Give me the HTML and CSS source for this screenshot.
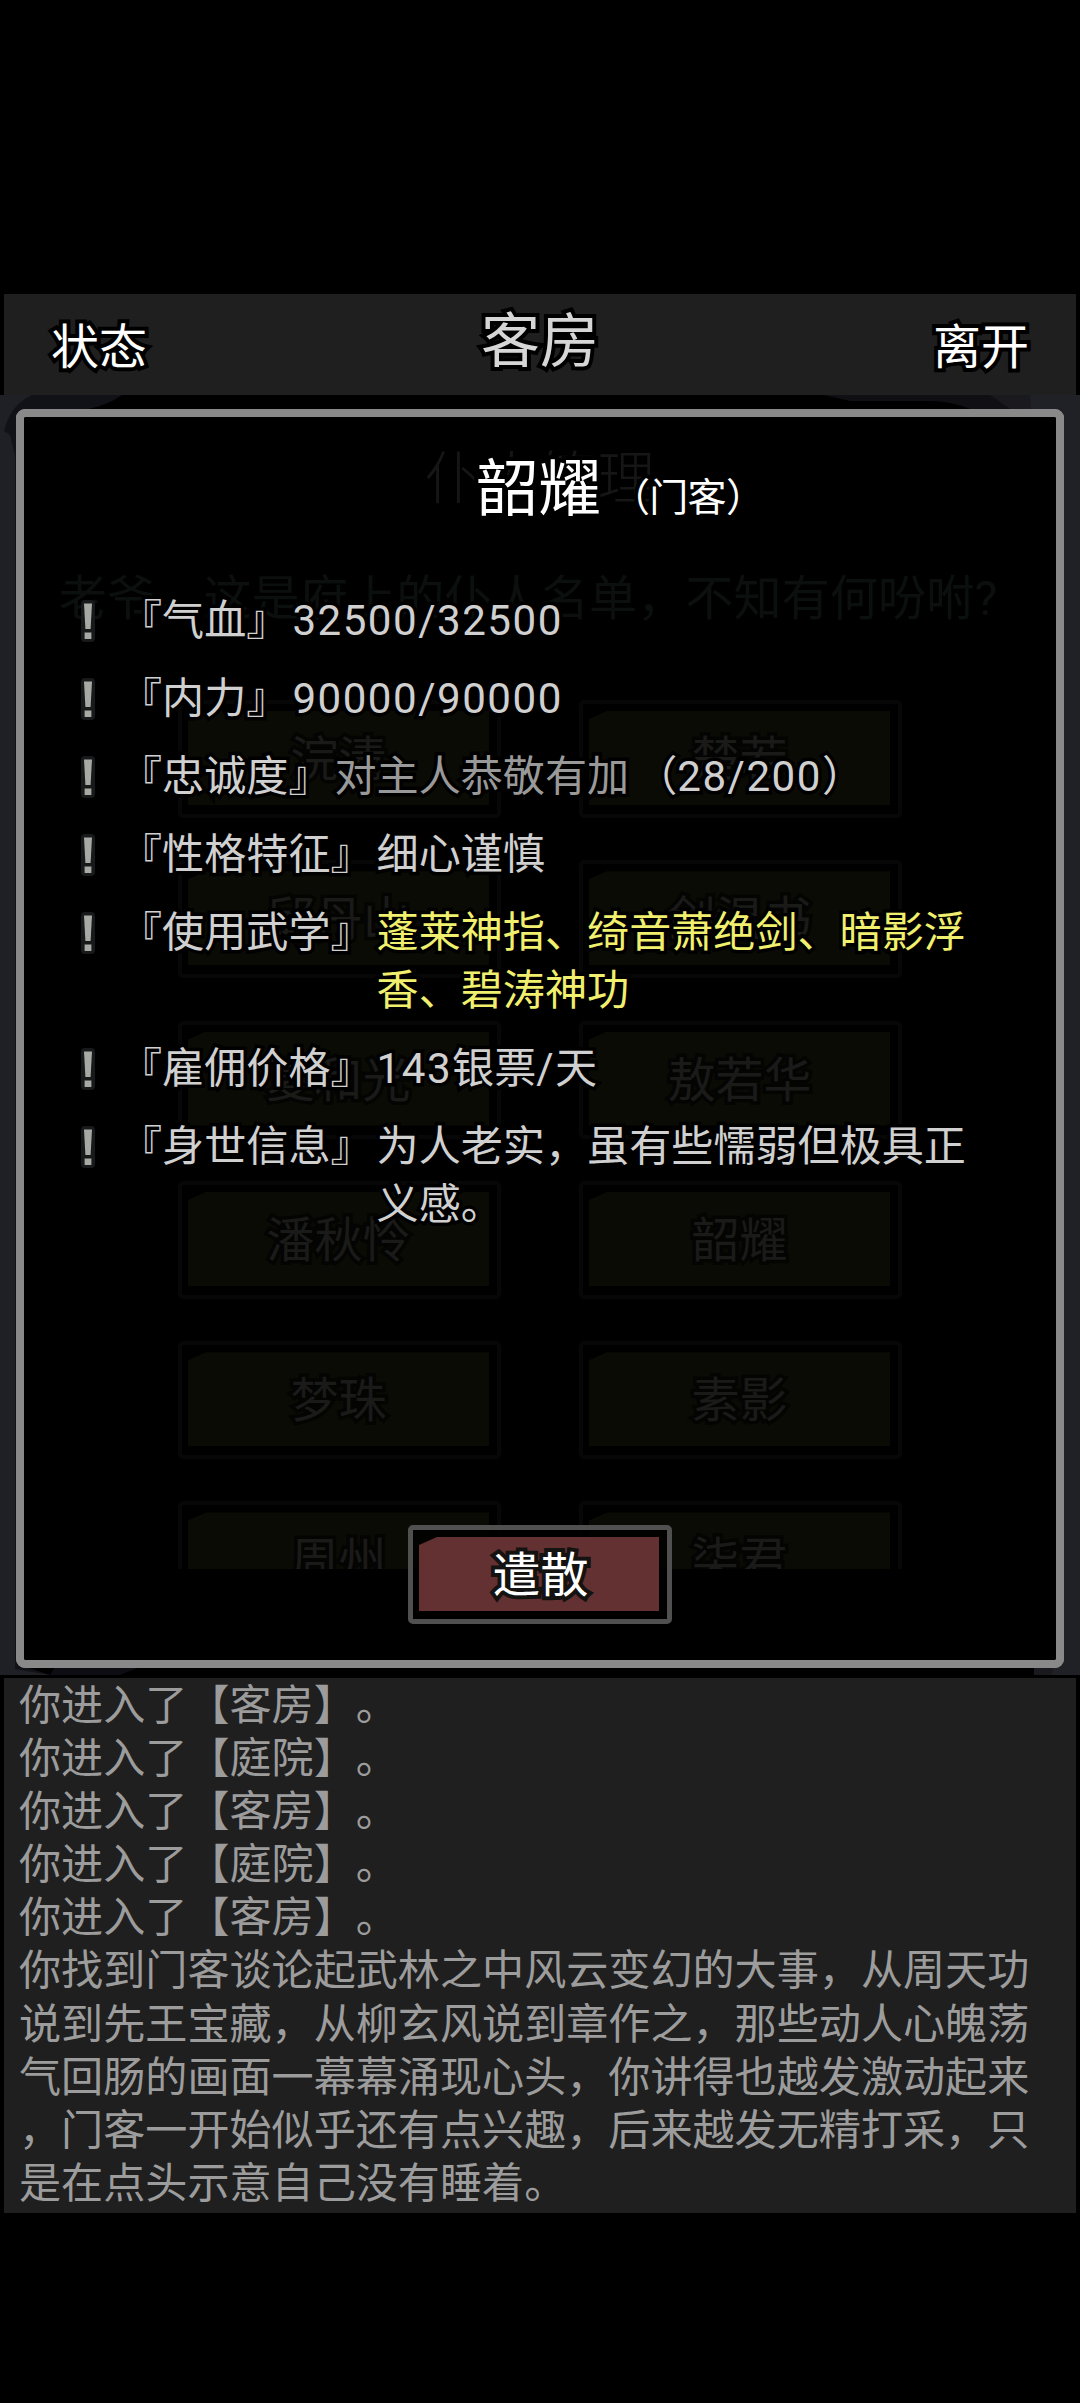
FILE: index.html
```html
<!DOCTYPE html>
<html lang="zh-CN">
<head>
<meta charset="utf-8">
<title>客房</title>
<link rel="stylesheet" href="styles.css">
</head>
<body>
<svg class="defs" width="0" height="0" aria-hidden="true">
  <symbol id="mark" viewBox="0 0 16 42">
    <rect x="1" y="0" width="14" height="42" rx="4" fill="#17191a"/>
    <path d="M4 3.5h8L10.6 29H5.4z" fill="#a8a9a5"/>
    <path d="M4.6 32.5h6.8v6.5H4.6z" fill="#a8a9a5"/>
  </symbol>
</svg>
<header class="topbar">
  <button class="nav">状态</button>
  <h1 class="place">客房</h1>
  <button class="nav">离开</button>
</header>
<main class="scene">
  <svg class="scenery" viewBox="0 0 1080 1280" preserveAspectRatio="none" aria-hidden="true">
    <rect width="1080" height="1280" fill="#000"/>
    <path d="M0 0H122Q108 10 88 14L20 60V1270L50 1280H0z" fill="#111217"/>
    <path d="M0 0H32Q10 10 4 36L10 40 15 60V1274L50 1280H0z" fill="#1f2025"/>
    <path d="M50 1280L55 1272H140L120 1280z" fill="#0d0d13"/>
    <path d="M824 0H1080V60H1040L970 14Q950 6 930 6H850z" fill="#0f0f14"/>
    <path d="M990 0H1080V1280H1034V1270H1060V60L1010 14z" fill="#19191e"/>
    <path d="M1030 0H1080V1280H1052L1055 1260V30H1032z" fill="#202126"/>
  </svg>
  <section class="panel roster">
    <h2 class="roster-title">仆人管理</h2>
    <p class="roster-lead">老爷，这是府上的仆人名单，不知有何吩咐?</p>
    <div class="roster-grid">
      <div class="plate"><span>浣清</span></div><div class="plate"><span>楚若</span></div>
      <div class="plate"><span>邱丹山</span></div><div class="plate"><span>剑温书</span></div>
      <div class="plate"><span>夏和光</span></div><div class="plate"><span>敖若华</span></div>
      <div class="plate"><span>潘秋怜</span></div><div class="plate"><span>韶耀</span></div>
      <div class="plate"><span>梦珠</span></div><div class="plate"><span>素影</span></div>
      <div class="plate"><span>周州</span></div><div class="plate"><span>柒君</span></div>
    </div>
  </section>
  <section class="panel detail">
    <h2 class="name">韶耀<small>（门客）</small></h2>
    <ul class="stats">
      <li><svg class="mark"><use href="#mark"/></svg><span class="label">『气血』</span><span class="value">32500/32500</span></li>
      <li><svg class="mark"><use href="#mark"/></svg><span class="label">『内力』</span><span class="value">90000/90000</span></li>
      <li><svg class="mark"><use href="#mark"/></svg><span class="label">『忠诚度』</span><span class="value dim">对主人恭敬有加</span><span class="value degree">（<span class="digits">28/200</span>）</span></li>
      <li><svg class="mark"><use href="#mark"/></svg><span class="label">『性格特征』</span><span class="value">细心谨慎</span></li>
      <li><svg class="mark"><use href="#mark"/></svg><span class="label">『使用武学』</span><span class="value skill">蓬莱神指、绮音萧绝剑、暗影浮<br>香、碧涛神功</span></li>
      <li><svg class="mark"><use href="#mark"/></svg><span class="label">『雇佣价格』</span><span class="value"><span class="digits">143</span>银票<span class="digits">/</span>天</span></li>
      <li><svg class="mark"><use href="#mark"/></svg><span class="label">『身世信息』</span><span class="value">为人老实，虽有些懦弱但极具正<br>义感。</span></li>
    </ul>
    <button class="dismiss"><span>遣散</span></button>
  </section>
</main>
<footer class="log">
  <p>你进入了【客房】。</p>
  <p>你进入了【庭院】。</p>
  <p>你进入了【客房】。</p>
  <p>你进入了【庭院】。</p>
  <p>你进入了【客房】。</p>
  <p>你找到门客谈论起武林之中风云变幻的大事，从周天功<br>说到先王宝藏，从柳玄风说到章作之，那些动人心魄荡<br>气回肠的画面一幕幕涌现心头，你讲得也越发激动起来<br>，门客一开始似乎还有点兴趣，后来越发无精打采，只<br>是在点头示意自己没有睡着。</p>
</footer>
</body>
</html>
```
FILE: styles.css
```css
* { box-sizing: border-box; margin: 0; padding: 0; }

body {
  width: 1080px;
  height: 2403px;
  padding-top: 294px;
  overflow: hidden;
  background: #000;
  color: #d0d0d0;
  font-family: Roboto, "Noto Sans CJK SC", sans-serif;
  font-size: 42.1px;
  text-spacing-trim: space-all;
  white-space: nowrap;
}

.defs { display: block; }

button { background: none; border: 0; font: inherit; color: inherit; }

.topbar {
  display: grid;
  grid-template-columns: 1fr auto 1fr;
  align-items: center;
  height: 101px;
  margin: 0 4px;
  padding: 0 47px;
  background: #1f1f1f;
}

.nav {
  justify-self: start;
  padding-top: 7px;
  color: #fff;
  font-size: 48px;
  line-height: 60px;
  -webkit-text-stroke: 8px #000;
  paint-order: stroke fill;
}

.nav:last-child { justify-self: end; }

.place {
  padding-bottom: 15px;
  color: #d6d6d6;
  font-family: KaiTi, STKaiti, "Noto Sans CJK SC", sans-serif;
  font-size: 59px;
  font-weight: 400;
  line-height: 64px;
  -webkit-text-stroke: 8px #000;
  paint-order: stroke fill;
}

.scene { position: relative; height: 1280px; }

.scenery { display: block; width: 1080px; height: 1280px; }

/* the roster and the detail dialog are stacked over the scene */
.panel {
  position: absolute;
  top: 14px;
  left: 16px;
  width: 1048px;
  height: 1259px;
  border: 8px solid #898989;
  border-radius: 9px;
}

.roster { background: #000; text-align: center; }

.roster-title {
  padding-top: 27px;
  color: #161616;
  font-family: KaiTi, STKaiti, "Noto Sans CJK SC", sans-serif;
  font-size: 57.6px;
  font-weight: 300;
  line-height: 60px;
}

.roster-lead {
  margin-top: 65px;
  padding-right: 24px;
  color: #0b0f0e;
  font-size: 48.2px;
  line-height: 60px;
}

.roster-grid {
  display: grid;
  grid-template-columns: 323px 323px;
  grid-auto-rows: 118px;
  gap: 42.3px 78px;
  height: 869px;
  margin-top: 71px;
  padding-left: 154px;
  overflow: hidden;
}

.plate {
  padding: 7px 8px 9px 6px;
  border: 4px solid #070707;
  border-radius: 5px;
}

.plate span {
  display: block;
  height: 94px;
  background: #0b0b05;
  clip-path: polygon(18px 0, 100% 0, 100% 100%, 0 100%, 0 8px);
  color: #1a1a19;
  font-size: 48px;
  line-height: 97px;
  -webkit-text-stroke: 7px #040403;
  paint-order: stroke fill;
}

.detail { display: flex; flex-direction: column; }

.name {
  display: flex;
  align-items: baseline;
  padding: 33px 0 0 452px;
  color: #fff;
  font-size: 62.5px;
  font-weight: 400;
  line-height: 80px;
  -webkit-text-stroke: 8px #000;
  paint-order: stroke fill;
}

.name small { margin-left: 10px; font-size: 39px; letter-spacing: -0.7px; }

.stats {
  display: flex;
  flex-direction: column;
  gap: 20px;
  margin-top: 54px;
  padding-left: 56px;
  list-style: none;
}

.stats li { display: flex; line-height: 58px; }

.mark { width: 16px; height: 42px; margin-top: 8px; }

.label, .value {
  -webkit-text-stroke: 7px #000;
  paint-order: stroke fill;
}

.label { margin: 0 4px 0 24px; }

.stats li:nth-child(-n+2) .value, .digits { letter-spacing: 1.5px; }

.dim { color: #999; }

.degree { margin-left: 6px; }

.skill { color: #f0f06e; }

.dismiss {
  position: absolute;
  top: 1108px;
  left: 384px;
  width: 264px;
  height: 99px;
  padding: 7px 8px 8px 6px;
  border: 5px solid #505050;
  border-radius: 5px;
  background: rgba(0, 0, 0, 0.8);
}

.dismiss span {
  display: block;
  height: 74px;
  padding-left: 3px;
  background: #633131;
  clip-path: polygon(18px 0, 100% 0, 100% 100%, 0 100%, 0 8px);
  color: #fff;
  font-size: 48px;
  line-height: 77px;
  -webkit-text-stroke: 8px #151212;
  paint-order: stroke fill;
}

.log {
  height: 535px;
  margin: 3px 4px 0;
  padding: 1px 0 0 15px;
  background: #1f1f1f;
  color: #9c9c9c;
  line-height: 53.1px;
}
```
